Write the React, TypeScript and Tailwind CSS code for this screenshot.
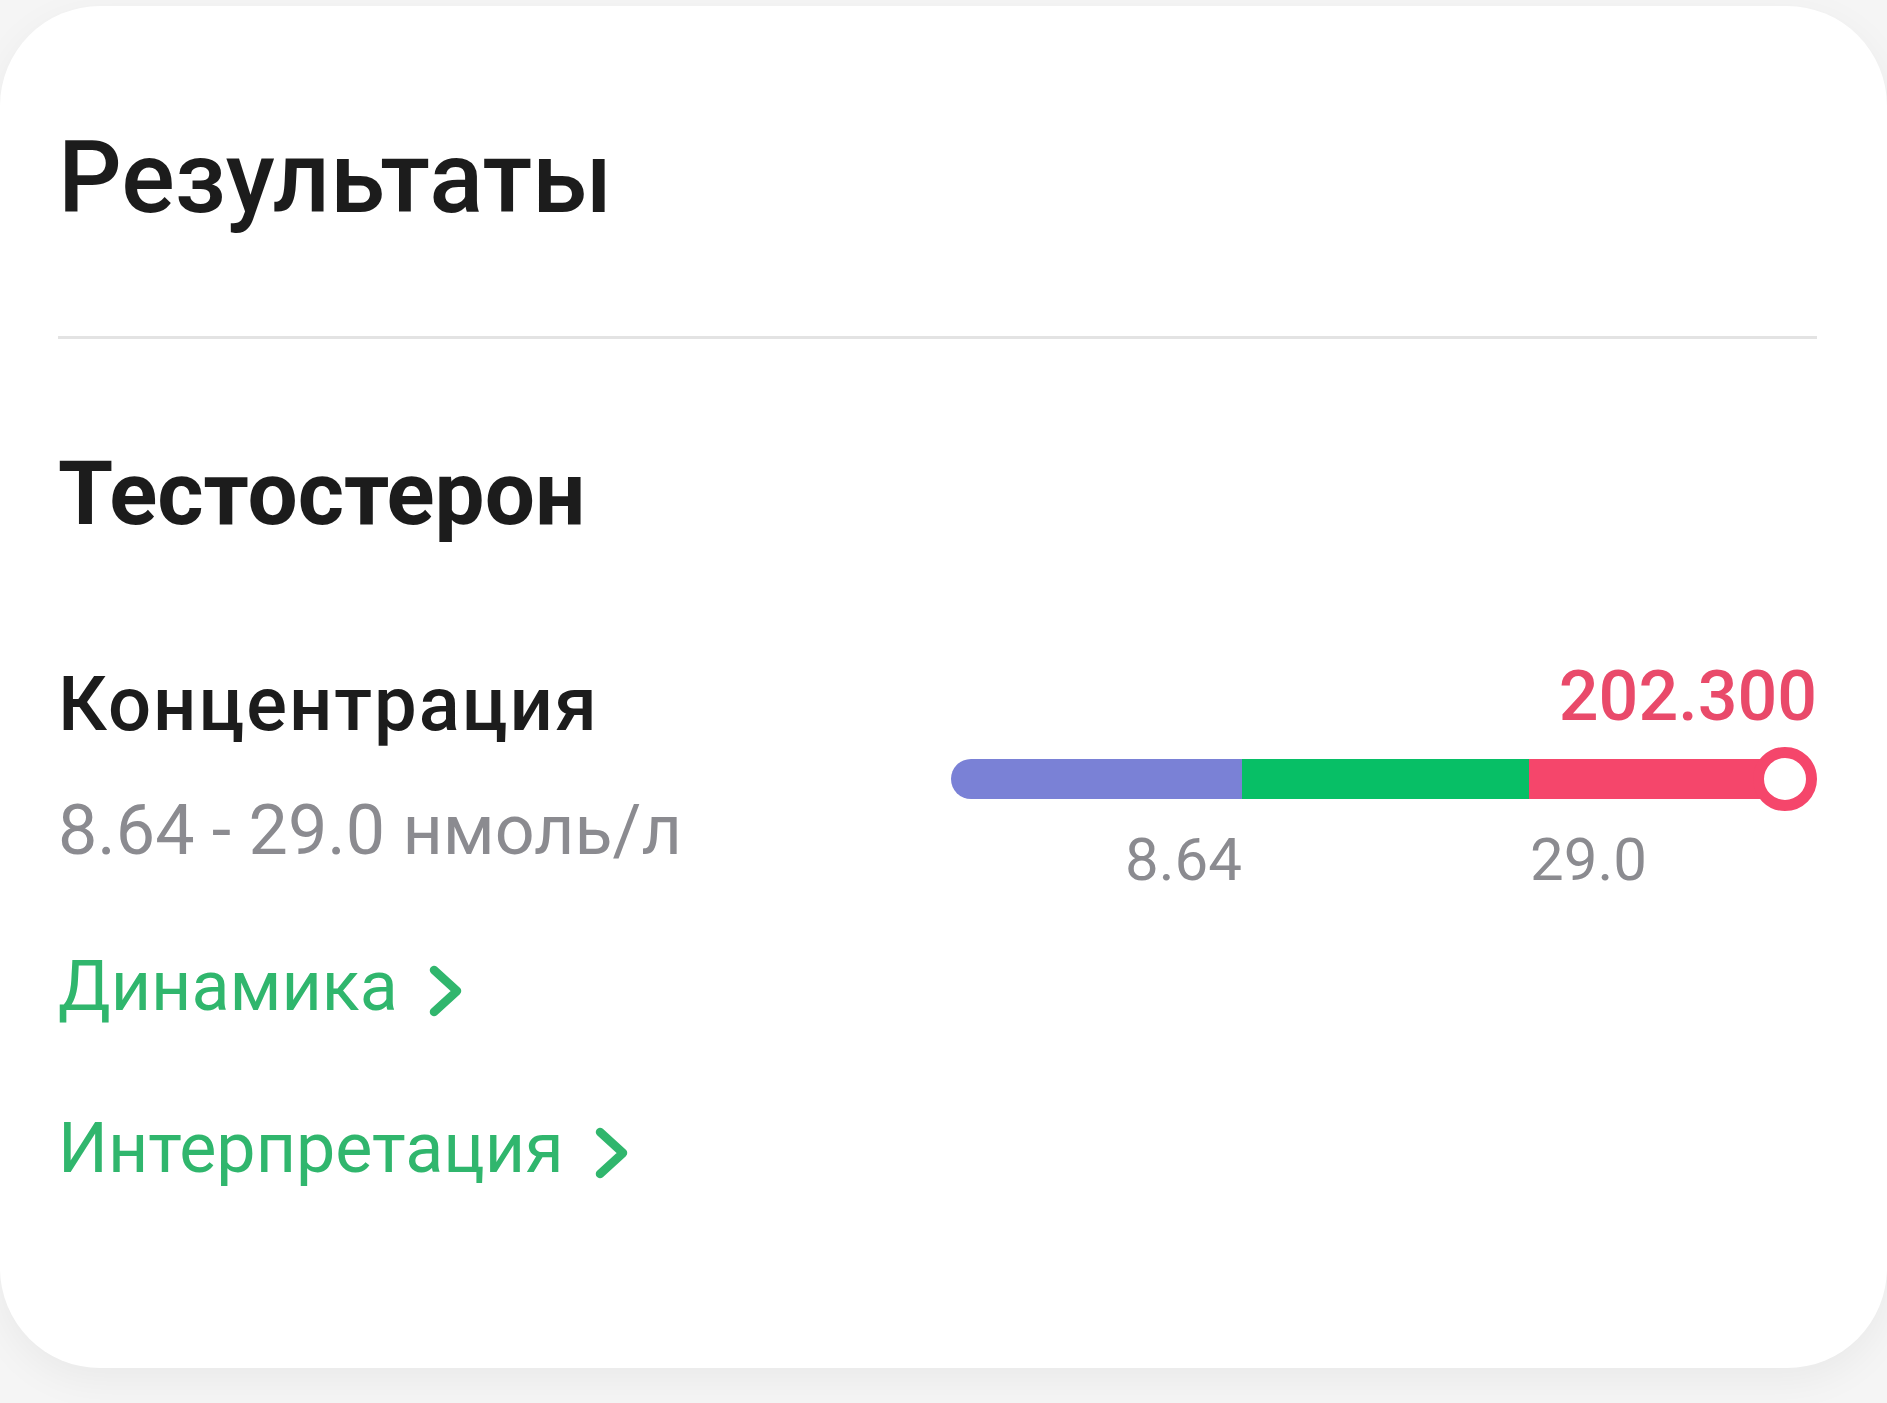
import React from "react";

const font = { fontFamily: "Roboto, 'Noto Sans', sans-serif" };

function Chevron() {
  return (
    <svg width="40" height="56" viewBox="0 0 40 56" className="ml-[28px] mt-[12px]" aria-hidden>
      <polyline
        points="8,7 31,28 8,49"
        fill="none"
        stroke="#30b66d"
        strokeWidth="8.5"
        strokeLinecap="round"
        strokeLinejoin="round"
      />
    </svg>
  );
}

function LinkRow({ label, className }: { label: string; className?: string }) {
  return (
    <div className={"flex items-start text-[70px] leading-none text-[#30b66d] " + (className ?? "")}>
      <span>{label}</span>
      <Chevron />
    </div>
  );
}

function RangeBar() {
  return (
    <div className="w-[866px] flex flex-col">
      <div className="text-right text-[70px] leading-none font-medium text-[#e94a6a]">202.300</div>
      <div className="relative mt-[16px] h-[64px] flex items-center">
        <div className="flex h-[40px] w-[834px]">
          <div className="w-[291px] h-full rounded-l-full bg-[#7a81d6]" />
          <div className="w-[287px] h-full bg-[#07bf66]" />
          <div className="flex-1 h-full bg-[#f5466b]" />
        </div>
        <div className="absolute right-0 top-0 w-[64px] h-[64px] rounded-full border-[11px] border-[#f5466b] bg-white" />
      </div>
      <div className="mt-[19px] grid grid-cols-[291px_287px_1fr] text-[60px] leading-none text-[#8b8b90]">
        <div className="text-right">8.64</div>
        <div />
        <div className="pl-[1px]">29.0</div>
      </div>
    </div>
  );
}

export default function App() {
  return (
    <div className="min-h-[1403px] w-full bg-[#f5f5f5] pt-[6px]" style={font}>
      <div className="h-[1362px] w-full rounded-[100px] bg-white shadow-[0_12px_40px_rgba(0,0,0,0.05)] pl-[58px] pr-[70px] pt-[122px]">
        <h1 className="text-[100px] leading-none font-medium text-[#1c1c1c]">Результаты</h1>
        <div className="mt-[108px] h-[3px] bg-[#e3e3e3]" />
        <h2 className="mt-[110px] text-[89px] leading-none font-bold text-[#1c1c1c]">Тестостерон</h2>
        <div className="mt-[123px] flex items-start justify-between">
          <div className="flex flex-col pt-[5px]">
            <div className="text-[76px] leading-none font-medium tracking-[2px] text-[#1c1c1c]">Концентрация</div>
            <div className="mt-[53px] text-[70px] leading-none text-[#8b8b90]">8.64 - 29.0 нмоль/л</div>
            <LinkRow label="Динамика" className="mt-[86px]" />
            <LinkRow label="Интерпретация" className="mt-[92px]" />
          </div>
          <RangeBar />
        </div>
      </div>
    </div>
  );
}
